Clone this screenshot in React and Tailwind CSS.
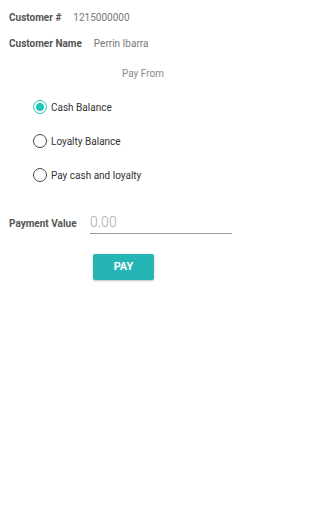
import React, { useState } from 'react';

const options = [
  { id: 'cash', label: 'Cash Balance' },
  { id: 'loyalty', label: 'Loyalty Balance' },
  { id: 'both', label: 'Pay cash and loyalty' },
];

const Radio = ({ checked }) => (
  <span className={`flex h-[14px] w-[14px] items-center justify-center rounded-full border-[1.5px] ${checked ? 'border-[#1fc7b6]' : 'border-[#444]'}`}>
    {checked && <span className="h-[8px] w-[8px] rounded-full bg-[#1fc7b6]" />}
  </span>
);

export default function App() {
  const [payFrom, setPayFrom] = useState('cash');

  return (
    <div className="w-[286px] h-[512px] bg-white font-['Roboto',sans-serif] text-[10px]">
      {/* Customer info */}
      <div className="pl-[9px] pt-[11px]">
        <div className="flex items-center h-[12px]">
          <span className="font-bold text-[#555]">Customer #</span>
          <span className="ml-[12px] text-[#777]">1215000000</span>
        </div>
        <div className="flex items-center h-[12px] mt-[14px]">
          <span className="font-bold text-[#555]">Customer Name</span>
          <span className="ml-[12px] text-[#777]">Perrin Ibarra</span>
        </div>
      </div>

      <div className="mt-[19px] text-center text-[#888] h-[12px] leading-[12px]">Pay From</div>

      {/* Pay from options */}
      <div className="mt-[21px] pl-[33px] flex flex-col gap-[22px]">
        {options.map((o) => (
          <label key={o.id} className="flex items-center h-[12px] cursor-pointer" onClick={() => setPayFrom(o.id)}>
            <Radio checked={payFrom === o.id} />
            <span className="ml-[4px] text-[#333]">{o.label}</span>
          </label>
        ))}
      </div>

      {/* Payment value */}
      <div className="mt-[32px] pl-[9px] flex items-end">
        <span className="font-bold text-[#555] w-[81px] pb-[3px]">Payment Value</span>
        <div className="w-[142px] border-b border-[#999] leading-[18px]">
          <span className="text-[14px] font-light text-[#aaa]">0.00</span>
        </div>
      </div>

      <div className="mt-[20px] pl-[93px]">
        <button className="w-[61px] h-[26px] rounded-[2px] bg-[#26b5b5] text-white font-bold text-[11px] shadow-[0_1px_2px_rgba(0,0,0,0.25)]">
          PAY
        </button>
      </div>
    </div>
  );
}
